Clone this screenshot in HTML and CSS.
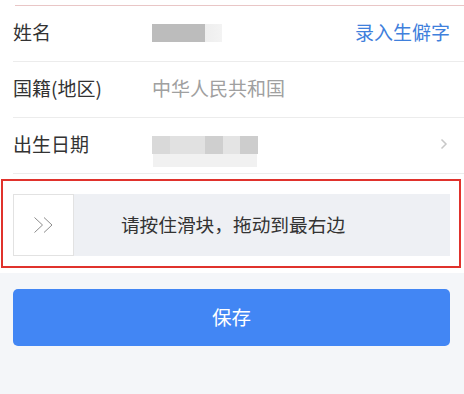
FILE: index.html
```html
<!DOCTYPE html>
<html lang="zh-CN">
<head>
    <meta charset="UTF-8">
    <meta name="viewport" content="width=device-width, initial-scale=1.0">
    <title>实名信息</title>
    <link rel="stylesheet" href="styles.css">
</head>
<body>
    <div class="form">
        <div class="top-line"></div>
        <div class="row">
            <span class="label">姓名</span>
            <span class="value">
                <span class="mask mask-name"></span>
            </span>
            <a class="link" href="#">录入生僻字</a>
        </div>
        <div class="row">
            <span class="label">国籍(地区)</span>
            <span class="value muted">中华人民共和国</span>
        </div>
        <div class="row">
            <span class="label">出生日期</span>
            <span class="value">
                <span class="mask mask-date">
                    <i class="m1"></i><i class="m2"></i><i class="m3"></i><i class="m4"></i><i class="m5"></i>
                </span>
            </span>
            <svg class="arrow" width="8" height="12" viewBox="0 0 8 12">
                <path d="M1.5 1.5 L6 6 L1.5 10.5" fill="none" stroke="#c8c8c8" stroke-width="1.5"/>
            </svg>
        </div>
    </div>

    <div class="verify">
        <div class="slider">
            <div class="handle">
                <svg width="22" height="18" viewBox="0 0 22 18">
                    <path d="M1.5 1.5 L9.5 9 L1.5 16.5 M11 1.5 L19 9 L11 16.5" fill="none" stroke="#8c8c8c" stroke-width="1"/>
                </svg>
            </div>
            <span class="slider-text">请按住滑块，拖动到最右边</span>
        </div>
        <div class="highlight"></div>
    </div>

    <button class="save">保存</button>
</body>
</html>
```

FILE: styles.css
```css
body {
    margin: 0;
    padding: 0;
    background-color: #f4f6f9;
    font-family: "Noto Sans CJK SC", "Noto Sans", sans-serif;
    color: #333;
}
.form {
    background: #fff;
    padding-left: 13px;
    padding-top: 5px;
}
.top-line {
    height: 1px;
    margin-left: 2px;
    background: #e9c6c6;
}
.row {
    display: flex;
    align-items: center;
    box-sizing: border-box;
    height: 56px;
    padding-bottom: 5px;
    border-bottom: 1px solid #ececec;
    padding-right: 14px;
    font-size: 19px;
}
.label {
    width: 139px;
    flex-shrink: 0;
}
.value {
    flex: 1;
    display: flex;
    align-items: center;
}
.muted {
    color: #a0a0a0;
}
.link {
    color: #3f80dc;
    text-decoration: none;
}
.arrow {
    margin-right: 2px;
    margin-top: 2px;
}
.mask {
    display: block;
}
.mask-name {
    width: 70px;
    height: 18px;
    margin-top: 4px;
    background: linear-gradient(to right, #bcbcbc 0, #bcbcbc 53px, #eeeeee 53px, #f3f3f3 70px);
}
.mask-date {
    display: flex;
    height: 18px;
    margin-top: 4px;
    box-shadow: 0 14px 0 -1px #f1f1f1;
}
.mask-date i {
    display: block;
    height: 18px;
}
.mask-date .m1 { width: 18px; background: #d9d9d9; }
.mask-date .m2 { width: 35px; background: #e1e1e1; }
.mask-date .m3 { width: 18px; background: #cfcfcf; }
.mask-date .m4 { width: 17px; background: #e4e4e4; }
.mask-date .m5 { width: 18px; background: #cdcdcd; }
.verify {
    position: relative;
    background: #fff;
    padding: 20px 14px 17px 13px;
}
.slider {
    position: relative;
    display: flex;
    align-items: center;
    justify-content: center;
    height: 62px;
    background: #eef0f4;
}
.handle {
    position: absolute;
    left: 0;
    top: 0;
    bottom: 0;
    width: 59px;
    display: flex;
    align-items: center;
    justify-content: center;
    background: #fff;
    border: 1px solid #e2e2e2;
}
.slider-text {
    font-size: 18.7px;
    color: #333;
    margin-left: 3px;
    margin-bottom: 4px;
}
.highlight {
    position: absolute;
    left: 1px;
    top: 5px;
    width: 456px;
    height: 85px;
    border: 2px solid #e0322c;
}
.save {
    display: block;
    width: calc(100% - 27px);
    margin: 16px 14px 0 13px;
    height: 57px;
    border: none;
    border-radius: 5px;
    background: #4286f4;
    color: #fff;
    font-family: "Noto Sans CJK SC", "Noto Sans", sans-serif;
    font-size: 19.5px;
    padding-bottom: 4px;
    cursor: pointer;
}
```
